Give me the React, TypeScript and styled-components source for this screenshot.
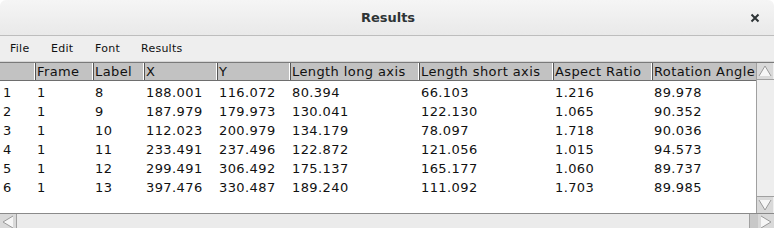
import React from 'react';
import styled, { createGlobalStyle } from 'styled-components';

const GlobalStyle = createGlobalStyle`
  html, body {
    margin: 0;
    padding: 0;
    background: #ffffff;
  }
`

const columns = [
  { title: '', width: 34 },
  { title: 'Frame', width: 58 },
  { title: 'Label', width: 51 },
  { title: 'X', width: 73 },
  { title: 'Y', width: 73 },
  { title: 'Length long axis', width: 129 },
  { title: 'Length short axis', width: 134 },
  { title: 'Aspect Ratio', width: 99 },
  { title: 'Rotation Angle', width: 106 },
];

const rows = [
  ['1', '1', '8', '188.001', '116.072', '80.394', '66.103', '1.216', '89.978'],
  ['2', '1', '9', '187.979', '179.973', '130.041', '122.130', '1.065', '90.352'],
  ['3', '1', '10', '112.023', '200.979', '134.179', '78.097', '1.718', '90.036'],
  ['4', '1', '11', '233.491', '237.496', '122.872', '121.056', '1.015', '94.573'],
  ['5', '1', '12', '299.491', '306.492', '175.137', '165.177', '1.060', '89.737'],
  ['6', '1', '13', '397.476', '330.487', '189.240', '111.092', '1.703', '89.985'],
];

const menus = [
  { label: 'File', width: 41 },
  { label: 'Edit', width: 44 },
  { label: 'Font', width: 46 },
  { label: 'Results', width: 60 },
];

const Arrow = ({ dir }: { dir: 'up' | 'down' | 'left' | 'right' }) => {
  const pts = {
    up: '2,13 8,3 14,13',
    down: '2,3 8,13 14,3',
    left: '13,2 3,8 13,14',
    right: '3,2 13,8 3,14',
  }[dir];
  return (
    <svg width="16" height="16" viewBox="0 0 16 16">
      <polyline points={pts} fill="#f6f6f6" stroke="#9a9a9a" strokeWidth="1" />
    </svg>
  );
};

const App = () => {
  return (
    <>
      <GlobalStyle />
      <Window>
        <TitleBar>
          <Title>Results</Title>
          <CloseButton>
            <svg width="10" height="10" viewBox="0 0 10 10">
              <path d="M1.5 1.5 L8.5 8.5 M8.5 1.5 L1.5 8.5" stroke="#2e3436" strokeWidth="2" />
            </svg>
          </CloseButton>
        </TitleBar>
        <MenuBar>
          {menus.map((m) => (
            <MenuItem key={m.label} $w={m.width}>{m.label}</MenuItem>
          ))}
        </MenuBar>
        <TableArea>
          <TableView>
            <HeaderRow>
              {columns.map((c, i) => (
                <HeaderCell key={i} $w={c.width} $first={i === 0}>
                  {c.title}
                </HeaderCell>
              ))}
            </HeaderRow>
            <RowsBody>
              {rows.map((r, ri) => (
                <DataRow key={ri}>
                  {r.map((v, ci) => (
                    <DataCell key={ci} $w={columns[ci].width}>
                      {v}
                    </DataCell>
                  ))}
                </DataRow>
              ))}
            </RowsBody>
          </TableView>
          <VScroll>
            <ArrowBox>
              <Arrow dir="up" />
            </ArrowBox>
            <VThumb />
            <ArrowBox>
              <Arrow dir="down" />
            </ArrowBox>
          </VScroll>
        </TableArea>
        <HScroll>
          <ArrowBox>
            <Arrow dir="left" />
          </ArrowBox>
          <HThumb />
          <HTrack />
          <ArrowBox>
            <Arrow dir="right" />
          </ArrowBox>
        </HScroll>
      </Window>
    </>
  )
}

export default App


export const Window = styled.div`
  width: 774px;
  height: 228px;
  display: flex;
  flex-direction: column;
  overflow: hidden;
  background: #ffffff;
  font-family: "DejaVu Sans", sans-serif;
`

export const TitleBar = styled.div`
  height: 35px;
  flex: none;
  display: flex;
  align-items: center;
  justify-content: center;
  position: relative;
  background: linear-gradient(to bottom, #f5f5f5, #e9e9e9);
  border-bottom: 1px solid #bdbdbd;
  border-radius: 6px 6px 0 0;
`

export const Title = styled.div`
  font-family: "DejaVu Sans", sans-serif;
  font-weight: bold;
  font-size: 13px;
  color: #2e3436;
  margin-left: 2px;
`

export const CloseButton = styled.div`
  position: absolute;
  right: 14px;
  top: 13px;
  width: 10px;
  height: 10px;
  display: flex;
`

export const MenuBar = styled.div`
  height: 25px;
  flex: none;
  display: flex;
  align-items: center;
  padding-left: 10px;
  background: #eeeeee;
  border-bottom: 1px solid #d6d6d6;
`

export const MenuItem = styled.div<{ $w: number }>`
  width: ${(p) => p.$w}px;
  flex: none;
  font-size: 11px;
  letter-spacing: 0.25px;
  color: #111111;
`

export const TableArea = styled.div`
  display: flex;
  height: 150px;
  flex: none;
  border-top: 1px solid #7a7a7a;
`

export const TableView = styled.div`
  flex: 1;
  overflow: hidden;
  background: #ffffff;
`

export const HeaderRow = styled.div`
  display: flex;
  height: 17px;
  background: #c2c2c2;
  border-bottom: 1px solid #6e6e6e;
`

export const HeaderCell = styled.div<{ $w: number; $first?: boolean }>`
  width: ${(p) => p.$w}px;
  flex: none;
  box-sizing: border-box;
  font-size: 13px;
  letter-spacing: 0.4px;
  line-height: 17px;
  padding-left: 2px;
  color: #111111;
  white-space: nowrap;
  overflow: hidden;
  border-left: ${(p) => (p.$first ? 'none' : '1px solid #ffffff')};
  box-shadow: ${(p) => (p.$first ? 'none' : 'inset 1px 0 0 #555555')};
`

export const RowsBody = styled.div`
  padding-top: 2px;
`

export const DataRow = styled.div`
  display: flex;
  height: 19px;
  align-items: center;
`

export const DataCell = styled.div<{ $w: number }>`
  width: ${(p) => p.$w}px;
  flex: none;
  box-sizing: border-box;
  font-size: 13px;
  letter-spacing: 0.4px;
  padding-left: 3px;
  color: #111111;
  white-space: nowrap;
  overflow: hidden;
`

export const VScroll = styled.div`
  width: 17px;
  flex: none;
  display: flex;
  flex-direction: column;
  background: #eeeeee;
  border-left: 1px solid #a0a0a0;
`

export const ArrowBox = styled.div`
  width: 16px;
  height: 16px;
  flex: none;
  display: flex;
  background: #d9d9d9;
`

export const VThumb = styled.div`
  flex: 1;
  background: #eeeeee;
  border-top: 1px solid #a0a0a0;
  border-bottom: 1px solid #a0a0a0;
`

export const HScroll = styled.div`
  height: 15px;
  flex: none;
  display: flex;
  align-items: flex-start;
  background: #eeeeee;
  border-top: 1px solid #8a8a8a;
`

export const HThumb = styled.div`
  flex: 1;
  align-self: stretch;
  background: #ebebeb;
  border-left: 1px solid #a0a0a0;
  border-right: 1px solid #a0a0a0;
`

export const HTrack = styled.div`
  width: 8px;
  flex: none;
  align-self: stretch;
  background: #c8c8c8;
`
